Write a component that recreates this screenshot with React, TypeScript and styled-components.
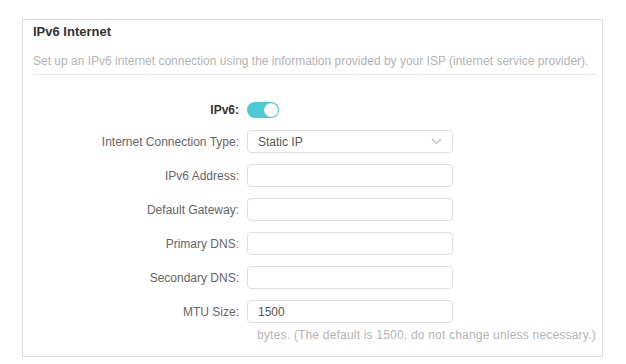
import { FC } from "react";
import styled, { createGlobalStyle } from "styled-components";

const GlobalStyle = createGlobalStyle`
  html, body {
    margin: 0;
    padding: 0;
    background: #ffffff;
    font-family: "Liberation Sans", Arial, sans-serif;
  }
`;

const fields = [
  { label: "IPv6 Address:", value: "" },
  { label: "Default Gateway:", value: "" },
  { label: "Primary DNS:", value: "" },
  { label: "Secondary DNS:", value: "" },
  { label: "MTU Size:", value: "1500" },
];

const App: FC = () => {
  return (
    <Page>
      <GlobalStyle />
      <Panel>
        <Title>IPv6 Internet</Title>
        <Description>
          Set up an IPv6 internet connection using the information provided by your ISP (internet service provider).
        </Description>
        <Form>
          <ToggleRow>
            <Label bold>IPv6:</Label>
            <Toggle>
              <Knob />
            </Toggle>
          </ToggleRow>
          <Row>
            <Label>Internet Connection Type:</Label>
            <Select>
              <span>Static IP</span>
              <svg width="11" height="7" viewBox="0 0 11 7">
                <path d="M1 1 L5.5 5.5 L10 1" fill="none" stroke="#b8b8b8" strokeWidth="1.1" />
              </svg>
            </Select>
          </Row>
          {fields.map((f) => (
            <Row key={f.label}>
              <Label>{f.label}</Label>
              <Input>{f.value}</Input>
            </Row>
          ))}
          <Hint>bytes. (The default is 1500, do not change unless necessary.)</Hint>
        </Form>
      </Panel>
    </Page>
  );
};

export default App;

const Page = styled.div`
  padding: 19px 0 0 22px;
`;

const Panel = styled.section`
  width: 579px;
  border: 1px solid #dcdcdc;
  box-shadow: 0 0 2px rgba(0, 0, 0, 0.06);
  padding: 4px 0 14px 0;
  background: #fff;
`;

const Title = styled.div`
  margin: 0 10px;
  font-size: 13px;
  line-height: 16px;
  font-weight: bold;
  color: #333;
`;

const Description = styled.div`
  margin: 13px 5px 0 10px;
  padding-bottom: 5px;
  border-bottom: 1px solid #e6e6e6;
  font-size: 12px;
  line-height: 16px;
  color: #b4b4b4;
  white-space: nowrap;
`;

const Form = styled.div`
  display: flex;
  flex-direction: column;
  gap: 11px;
  padding-top: 24px;
`;

const Row = styled.div`
  display: flex;
  align-items: center;
  gap: 8px;
  height: 23px;
`;

const ToggleRow = styled(Row)`
  height: 21px;
  margin-bottom: -1px;
`;

const Label = styled.label<{ bold?: boolean }>`
  width: 216px;
  text-align: right;
  font-size: 12px;
  color: ${(p) => (p.bold ? "#333" : "#666")};
  font-weight: ${(p) => (p.bold ? "bold" : "normal")};
`;

const Toggle = styled.div`
  width: 32px;
  height: 16px;
  border-radius: 8px;
  background: #4ccad6;
  display: flex;
  align-items: center;
  justify-content: flex-end;
  padding: 0 1px;
  box-sizing: border-box;
`;

const Knob = styled.div`
  width: 14px;
  height: 14px;
  border-radius: 50%;
  background: #fff;
  box-shadow: 0 0 1px rgba(0, 0, 0, 0.3);
`;

const Input = styled.div`
  width: 206px;
  height: 23px;
  box-sizing: border-box;
  border: 1px solid #dedede;
  border-radius: 4px;
  padding: 0 10px;
  display: flex;
  align-items: center;
  font-size: 12px;
  color: #555;
`;

const Select = styled(Input)`
  justify-content: space-between;
`;

const Hint = styled.div`
  margin: -6px 0 0 234px;
  font-size: 12px;
  line-height: 14px;
  letter-spacing: 0.2px;
  color: #b4b4b4;
`;
